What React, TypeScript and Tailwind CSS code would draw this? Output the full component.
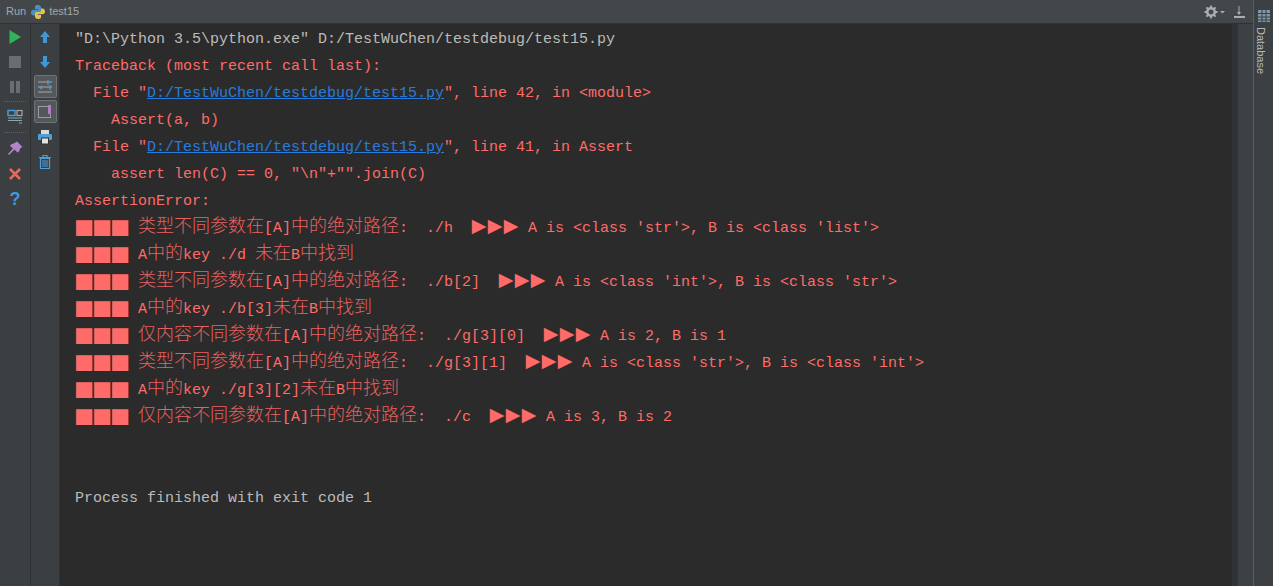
import React from "react";

const RED = "text-[#ff6b68]";

// CJK runs are a bit larger so they sit on the 18px grid of the console
const Cjk = ({ children }: { children: React.ReactNode }) => (
  <span className="text-[18px] leading-[15px] font-light text-[#e8615f] font-['Noto_Sans_CJK_SC']">{children}</span>
);

const Blocks = () => (
  <span className="inline-flex w-[54px] mr-[9px] translate-y-[3px] font-['Noto_Sans_CJK_SC'] text-[18px] leading-[15px] text-[#ff6b68]">
    <span className="w-[18px] flex justify-center scale-x-[1.12] scale-y-[1.1]">■</span>
    <span className="w-[18px] flex justify-center scale-x-[1.12] scale-y-[1.1]">■</span>
    <span className="w-[18px] flex justify-center scale-x-[1.12] scale-y-[1.1]">■</span>
  </span>
);

const Arrows = () => (
  <span className="inline-flex w-[48px] mr-[9px] font-['DejaVu_Sans'] text-[19px] leading-[15px]">
    <span className="w-[16px] flex justify-center">▶</span>
    <span className="w-[16px] flex justify-center">▶</span>
    <span className="w-[16px] flex justify-center">▶</span>
  </span>
);

const Line = ({ children, className = "" }: { children?: React.ReactNode; className?: string }) => (
  <div className={`h-[27px] leading-[27px] whitespace-pre ${className}`}>{children}</div>
);

const Link = ({ children }: { children: React.ReactNode }) => (
  <span className="text-[#287bde] underline">{children}</span>
);

const Btn = ({ children, active }: { children: React.ReactNode; active?: boolean }) => (
  <div
    className={`w-[23px] h-[23px] flex items-center justify-center rounded-[2px] ${
      active ? "bg-[#54585a] border border-[#6f7375]" : ""
    }`}
  >
    {children}
  </div>
);

const Python = () => (
  <svg width="16" height="16" viewBox="0 0 16 16">
    <path d="M8 1C5 1 5 2 5 3.500V5h3.200v.7H3.500C2 5.700 1 6.700 1 8.500s1 3 2.500 3H5V9.800c0-1 .8-1.800 1.800-1.800h2.700c1 0 1.500-.7 1.500-1.500V3.500C11 2 10 1 8 1z" fill="#4f8fc0" />
    <path d="M8 15c3 0 3-1 3-2.500V11H7.800v-.7h4.700c1.500 0 2.500-1 2.500-2.800s-1-3-2.500-3H11v1.700c0 1-.8 1.800-1.800 1.800H6.500C5.500 8 5 8.700 5 9.500v3C5 14 6 15 8 15z" fill="#e3c14d" />
  </svg>
);

export default function App() {
  return (
    <div className="w-[1273px] h-[586px] overflow-hidden flex bg-[#3c3f41] font-['Liberation_Mono',monospace] text-[15px]">
      <div className="flex-1 min-w-0 flex flex-col">
        {/* title bar */}
        <div className="h-[24px] shrink-0 flex items-center bg-[#43474a] border-b border-[#2f3133] font-['Liberation_Sans',sans-serif] text-[11px] text-[#a4a8aa]">
          <span className="ml-[6px]">Run</span>
          <span className="ml-[4px]"><Python /></span>
          <span className="ml-[3px]">test15</span>
          <div className="ml-auto flex items-center">
            <svg width="24" height="16" viewBox="0 0 24 16" className="mr-[5px]">
              <circle cx="8" cy="8" r="3.800" fill="none" stroke="#a9adaf" strokeWidth="2.600" />
              <path d="M8 1.500v3M8 11.500v3M1.500 8h3M11.500 8h3M3.400 3.400l2.100 2.100M10.500 10.500l2.100 2.100M3.400 12.600l2.100-2.100M10.500 5.500l2.100-2.100" stroke="#a9adaf" strokeWidth="1.800" />
              <path d="M17 7h5l-2.500 2.500z" fill="#a9adaf" />
            </svg>
            <svg width="14" height="16" viewBox="0 0 14 16" className="mr-[7px]">
              <path d="M7 2v8" stroke="#a9adaf" strokeWidth="1" />
              <path d="M5 8l2 3 2-3z" fill="#a9adaf" />
              <rect x="2" y="12" width="11" height="2" fill="#a9adaf" />
            </svg>
          </div>
        </div>

        <div className="flex-1 flex min-h-0">
          {/* run controls */}
          <div className="w-[31px] shrink-0 flex flex-col items-center gap-[2px] pt-[1px] border-r border-[#2f3133] bg-[#3c3f41]">
            <Btn>
              <svg width="14" height="16" viewBox="0 0 14 16"><path d="M1.500 1v14L13 8z" fill="#2fb45a" /></svg>
            </Btn>
            <Btn>
              <svg width="14" height="14" viewBox="0 0 14 14"><rect x="1" y="1" width="12" height="12" fill="#6b6e70" /></svg>
            </Btn>
            <Btn>
              <svg width="14" height="14" viewBox="0 0 14 14"><path d="M2 1h4v12H2zM8 1h4v12H8z" fill="#6b6e70" /></svg>
            </Btn>
            <div className="w-[22px] border-t border-dotted border-[#5c5f61] my-[1px]" />
            <Btn>
              <svg width="16" height="16" viewBox="0 0 16 16">
                <rect x="1" y="1.500" width="7" height="5" fill="none" stroke="#4d9fd6" strokeWidth="1.400" />
                <rect x="10" y="1.500" width="5" height="5" fill="none" stroke="#a5a8aa" strokeWidth="1.200" />
                <path d="M1 9h14M1 11.500h14M12 14h3" stroke="#8fa5b2" strokeWidth="1.200" />
              </svg>
            </Btn>
            <div className="w-[22px] border-t border-dotted border-[#5c5f61] my-[2px]" />
            <Btn>
              <svg width="18" height="18" viewBox="0 0 18 18">
                <path d="M11 1.500l5.500 5.500-2 1-1.500 3.500-1.500 1L8.500 9.500 3 15l-1-1 5-5.500L4 6l1-1.500 3.500-1.500z" fill="#b482cc" />
              </svg>
            </Btn>
            <Btn>
              <svg width="14" height="14" viewBox="0 0 14 14"><path d="M2 2l10 10M12 2L2 12" stroke="#e8695c" strokeWidth="2.600" /></svg>
            </Btn>
            <Btn>
              <span className="font-['Liberation_Sans',sans-serif] font-bold text-[18px] leading-none text-[#3f9bd8]">?</span>
            </Btn>
          </div>

          {/* console actions */}
          <div className="w-[29px] shrink-0 flex flex-col items-center gap-[2px] pt-[1px] border-r border-[#2f3133] bg-[#3c3f41]">
            <Btn>
              <svg width="12" height="14" viewBox="0 0 12 14"><path d="M6 1l5 6H8v6H4V7H1z" fill="#3f97d6" /></svg>
            </Btn>
            <Btn>
              <svg width="12" height="14" viewBox="0 0 12 14"><path d="M6 13L1 7h3V1h4v6h3z" fill="#3f97d6" /></svg>
            </Btn>
            <Btn active>
              <svg width="16" height="16" viewBox="0 0 16 16">
                <path d="M1 3h14M1 8h14M1 13h14" stroke="#a5a8aa" strokeWidth="1" />
                <path d="M11 1v5M13 6v5M5 7l-2 1.500L5 10" stroke="#4d9fd6" strokeWidth="1.200" fill="none" />
              </svg>
            </Btn>
            <Btn active>
              <svg width="16" height="16" viewBox="0 0 16 16">
                <rect x="1.500" y="2.500" width="12" height="11" fill="none" stroke="#9a9d9f" strokeWidth="1" />
                <rect x="11" y="1" width="3" height="9" fill="#b07cc6" />
              </svg>
            </Btn>
            <Btn>
              <svg width="16" height="16" viewBox="0 0 16 16">
                <rect x="4" y="1" width="8" height="4" fill="#d8dadb" />
                <rect x="1" y="5" width="14" height="6" rx="1" fill="#4d9fd6" />
                <rect x="4.500" y="9" width="7" height="6" fill="#dfe1e2" stroke="#333" strokeWidth="1" />
              </svg>
            </Btn>
            <Btn>
              <svg width="14" height="16" viewBox="0 0 14 16" fill="none" stroke="#4d9fd6">
                <path d="M1 3.500h12M5 3V1.500h4V3" strokeWidth="1.200" />
                <path d="M2.500 4.500h9v10h-9z" strokeWidth="1.200" />
                <path d="M5 6v7M7 6v7M9 6v7" strokeWidth="1" />
              </svg>
            </Btn>
          </div>

          {/* console output */}
          <div className={`flex-1 min-w-0 bg-[#2b2b2b] pl-[15px] pt-[2px] ${RED}`}>
            <Line className="text-[#bbbbbb]">"D:\Python 3.5\python.exe" D:/TestWuChen/testdebug/test15.py</Line>
            <Line>Traceback (most recent call last):</Line>
            <Line>  File "<Link>D:/TestWuChen/testdebug/test15.py</Link>", line 42, in &lt;module&gt;</Line>
            <Line>    Assert(a, b)</Line>
            <Line>  File "<Link>D:/TestWuChen/testdebug/test15.py</Link>", line 41, in Assert</Line>
            <Line>    assert len(C) == 0, "\n"+"".join(C)</Line>
            <Line>AssertionError:</Line>
            <Line><Blocks /><Cjk>类型不同参数在</Cjk>[A]<Cjk>中的绝对路径</Cjk>:  ./h  <Arrows />A is &lt;class 'str'&gt;, B is &lt;class 'list'&gt;</Line>
            <Line><Blocks />A<Cjk>中的</Cjk>key ./d <Cjk>未在</Cjk>B<Cjk>中找到</Cjk></Line>
            <Line><Blocks /><Cjk>类型不同参数在</Cjk>[A]<Cjk>中的绝对路径</Cjk>:  ./b[2]  <Arrows />A is &lt;class 'int'&gt;, B is &lt;class 'str'&gt;</Line>
            <Line><Blocks />A<Cjk>中的</Cjk>key ./b[3]<Cjk>未在</Cjk>B<Cjk>中找到</Cjk></Line>
            <Line><Blocks /><Cjk>仅内容不同参数在</Cjk>[A]<Cjk>中的绝对路径</Cjk>:  ./g[3][0]  <Arrows />A is 2, B is 1</Line>
            <Line><Blocks /><Cjk>类型不同参数在</Cjk>[A]<Cjk>中的绝对路径</Cjk>:  ./g[3][1]  <Arrows />A is &lt;class 'str'&gt;, B is &lt;class 'int'&gt;</Line>
            <Line><Blocks />A<Cjk>中的</Cjk>key ./g[3][2]<Cjk>未在</Cjk>B<Cjk>中找到</Cjk></Line>
            <Line><Blocks /><Cjk>仅内容不同参数在</Cjk>[A]<Cjk>中的绝对路径</Cjk>:  ./c  <Arrows />A is 3, B is 2</Line>
            <Line />
            <Line />
            <Line className="text-[#bbbbbb]">Process finished with exit code 1</Line>
          </div>

          {/* scrollbar gutter */}
          <div className="w-[6px] shrink-0 bg-[#303436]" />
          <div className="w-[15px] shrink-0 bg-[#3c4144]" />
        </div>
      </div>

      {/* database tool window strip */}
      <div className="w-[20px] shrink-0 bg-[#3c4043] border-l border-[#5a5e60] flex flex-col items-center pt-[9px]">
        <svg width="14" height="14" viewBox="0 0 14 14">
          <rect x="1" y="1" width="12" height="12" fill="#7f99a8" />
          <path d="M1 4.500h12M1 8h12M1 11h12M5 1v12M9 1v12" stroke="#3c3f41" strokeWidth="1" />
        </svg>
        <span className="mt-[4px] mr-[5px] [writing-mode:vertical-rl] font-['Liberation_Sans',sans-serif] text-[11px] text-[#b5b8ba]">Database</span>
      </div>
    </div>
  );
}
